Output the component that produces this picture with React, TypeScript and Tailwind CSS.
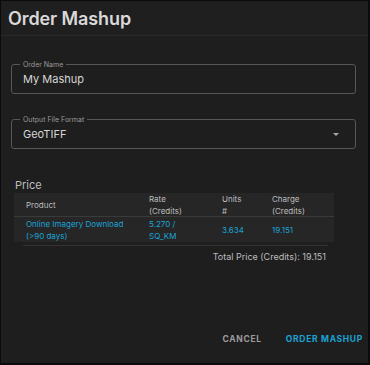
import React from "react";

const cyan = "text-[#1ba3d6]";

function Field({ label, value, select }: { label: string; value: string; select?: boolean }) {
  return (
    <div className="relative ml-[10px] mr-[12px] h-[30px] rounded-[3px] border border-[#575757] flex items-center pl-[11px] pr-[12px]">
      <span className="absolute -top-[5px] left-[8px] px-[3px] bg-[#1e1e1e] text-[7px] leading-[9px] text-[#9a9a9a]">
        {label}
      </span>
      <span className="flex-1 text-[11px] text-[#d6d6d6]">{value}</span>
      {select && (
        <svg width="6" height="3" viewBox="0 0 6 3" className="mr-[4px]">
          <path d="M0 0 L6 0 L3 3 Z" fill="#a8a8a8" />
        </svg>
      )}
    </div>
  );
}

export default function App() {
  return (
    <div
      className="w-[370px] h-[365px] bg-[#1e1e1e] border border-[#0b0b0b] border-b-2 border-r-2 flex flex-col"
      style={{ fontFamily: "Inter, 'Liberation Sans', sans-serif" }}
    >
      <div className="h-[35px] border-b border-[#2b2b2b] flex items-center pl-[7px] bg-[#1f1f1f]">
        <span className="text-[18px] font-semibold text-[#d9d9d9] tracking-[-0.1px]">Order Mashup</span>
      </div>
      <div className="pt-[28px]">
        <Field label="Order Name" value="My Mashup" />
      </div>
      <div className="pt-[25px]">
        <Field label="Output File Format" value="GeoTIFF" select />
      </div>
      <div className="pt-[29px] pl-[14px] text-[11px] leading-[14px] text-[#bdbdbd]">Price</div>
      <div className="ml-[13px] mt-[1px] w-[320px] bg-[#262626] text-[8px] leading-[12px]">
        <div className="grid grid-cols-[135px_73px_50px_1fr] h-[24px] items-center border-b border-[#3a3a3a] text-[#bdbdbd]">
          <span className="pl-[12px]">Product</span>
          <span>Rate<br />(Credits)</span>
          <span>Units<br />#</span>
          <span>Charge<br />(Credits)</span>
        </div>
        <div className={`grid grid-cols-[135px_73px_50px_1fr] h-[25px] items-center ${cyan}`}>
          <span className="pl-[12px]">Online Imagery Download<br />(&gt;90 days)</span>
          <span>5.270 /<br />SQ_KM</span>
          <span>3.634</span>
          <span>19.151</span>
        </div>
      </div>
      <div className="ml-[22px] mt-[3px] w-[305px] h-px bg-[#333333]" />
      <div className="w-[325px] text-right text-[9px] leading-[14px] text-[#bdbdbd] mt-[4px]">
        Total Price (Credits): 19.151
      </div>
      <div className="flex-1" />
      <div className="flex justify-end items-center gap-[24px] pr-[5px] pb-[17px] text-[8.5px] font-bold tracking-[0.7px]">
        <span className="text-[#9c9c9c]">CANCEL</span>
        <span className={cyan}>ORDER MASHUP</span>
      </div>
    </div>
  );
}
